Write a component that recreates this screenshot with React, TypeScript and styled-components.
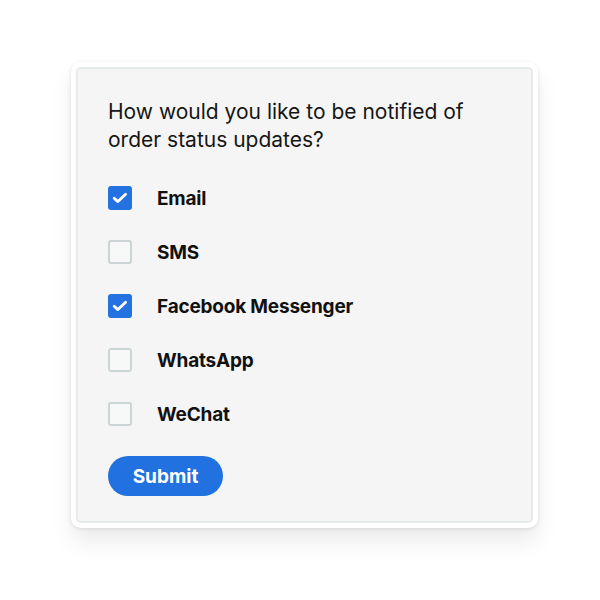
import { useState } from 'react';
import styled, { createGlobalStyle } from 'styled-components';

const GlobalStyle = createGlobalStyle`
  html, body {
    margin: 0;
    padding: 0;
    background: #ffffff;
  }
  body {
    font-family: 'Inter', 'Noto Sans', sans-serif;
  }
`;

const Page = styled.div`
  width: 600px;
  height: 600px;
  display: flex;
  align-items: flex-start;
  padding: 62px 0 0 71px;
  box-sizing: border-box;
`;

const Card = styled.div`
  width: 467px;
  height: 466px;
  box-sizing: border-box;
  padding: 5px;
  background: #ffffff;
  border-radius: 10px;
  box-shadow: 0 14px 22px rgba(0, 0, 0, 0.08), 0 1px 4px rgba(0, 0, 0, 0.1);
`;

const Panel = styled.form`
  height: 100%;
  box-sizing: border-box;
  background: #f5f5f5;
  border: 2px solid #e6eaea;
  border-radius: 5px;
  padding: 29px 30px 0 30px;
  display: flex;
  flex-direction: column;
`;

const Question = styled.h2`
  margin: 0 0 32px;
  font-size: 21px;
  line-height: 28px;
  font-weight: 400;
  color: #161616;
`;

const Options = styled.div`
  display: flex;
  flex-direction: column;
  gap: 30px;
`;

const Option = styled.label`
  display: flex;
  align-items: center;
  gap: 25px;
  height: 24px;
  cursor: pointer;
`;

const Box = styled.span<{ $checked: boolean }>`
  width: 24px;
  height: 24px;
  box-sizing: border-box;
  border-radius: 3px;
  display: flex;
  align-items: center;
  justify-content: center;
  background: ${({ $checked }) => ($checked ? '#2471e1' : '#f7f8f8')};
  border: 2px solid ${({ $checked }) => ($checked ? '#2471e1' : '#ccd5d5')};
`;

const Label = styled.span`
  font-size: 19px;
  font-weight: 700;
  letter-spacing: -0.2px;
  color: #111111;
`;

const SubmitButton = styled.button`
  margin-top: 30px;
  width: 115px;
  height: 40px;
  border: none;
  border-radius: 20px;
  background: #2271e1;
  color: #ffffff;
  font-family: inherit;
  font-size: 19px;
  font-weight: 700;
  cursor: pointer;
`;

const Check = () => (
  <svg width='16' height='12' viewBox='0 0 16 12' fill='none'>
    <path
      d='M2.2 6.2 L5.9 9.6 L13.6 2.2'
      stroke='#ffffff'
      strokeWidth='2.8'
      strokeLinecap='round'
      strokeLinejoin='round'
    />
  </svg>
);

const channels = ['Email', 'SMS', 'Facebook Messenger', 'WhatsApp', 'WeChat'];

const App = () => {
  const [selected, setSelected] = useState<string[]>([
    'Email',
    'Facebook Messenger',
  ]);

  const toggle = (name: string) =>
    setSelected((s) =>
      s.includes(name) ? s.filter((n) => n !== name) : [...s, name]
    );

  return (
    <>
      <GlobalStyle />
      <Page>
        <Card>
          <Panel onSubmit={(e) => e.preventDefault()}>
            <Question>
              How would you like to be notified of order status updates?
            </Question>
            <Options>
              {channels.map((name) => {
                const checked = selected.includes(name);
                return (
                  <Option key={name} onClick={() => toggle(name)}>
                    <Box $checked={checked}>{checked && <Check />}</Box>
                    <Label>{name}</Label>
                  </Option>
                );
              })}
            </Options>
            <div>
              <SubmitButton type='submit'>Submit</SubmitButton>
            </div>
          </Panel>
        </Card>
      </Page>
    </>
  );
};

export default App;
